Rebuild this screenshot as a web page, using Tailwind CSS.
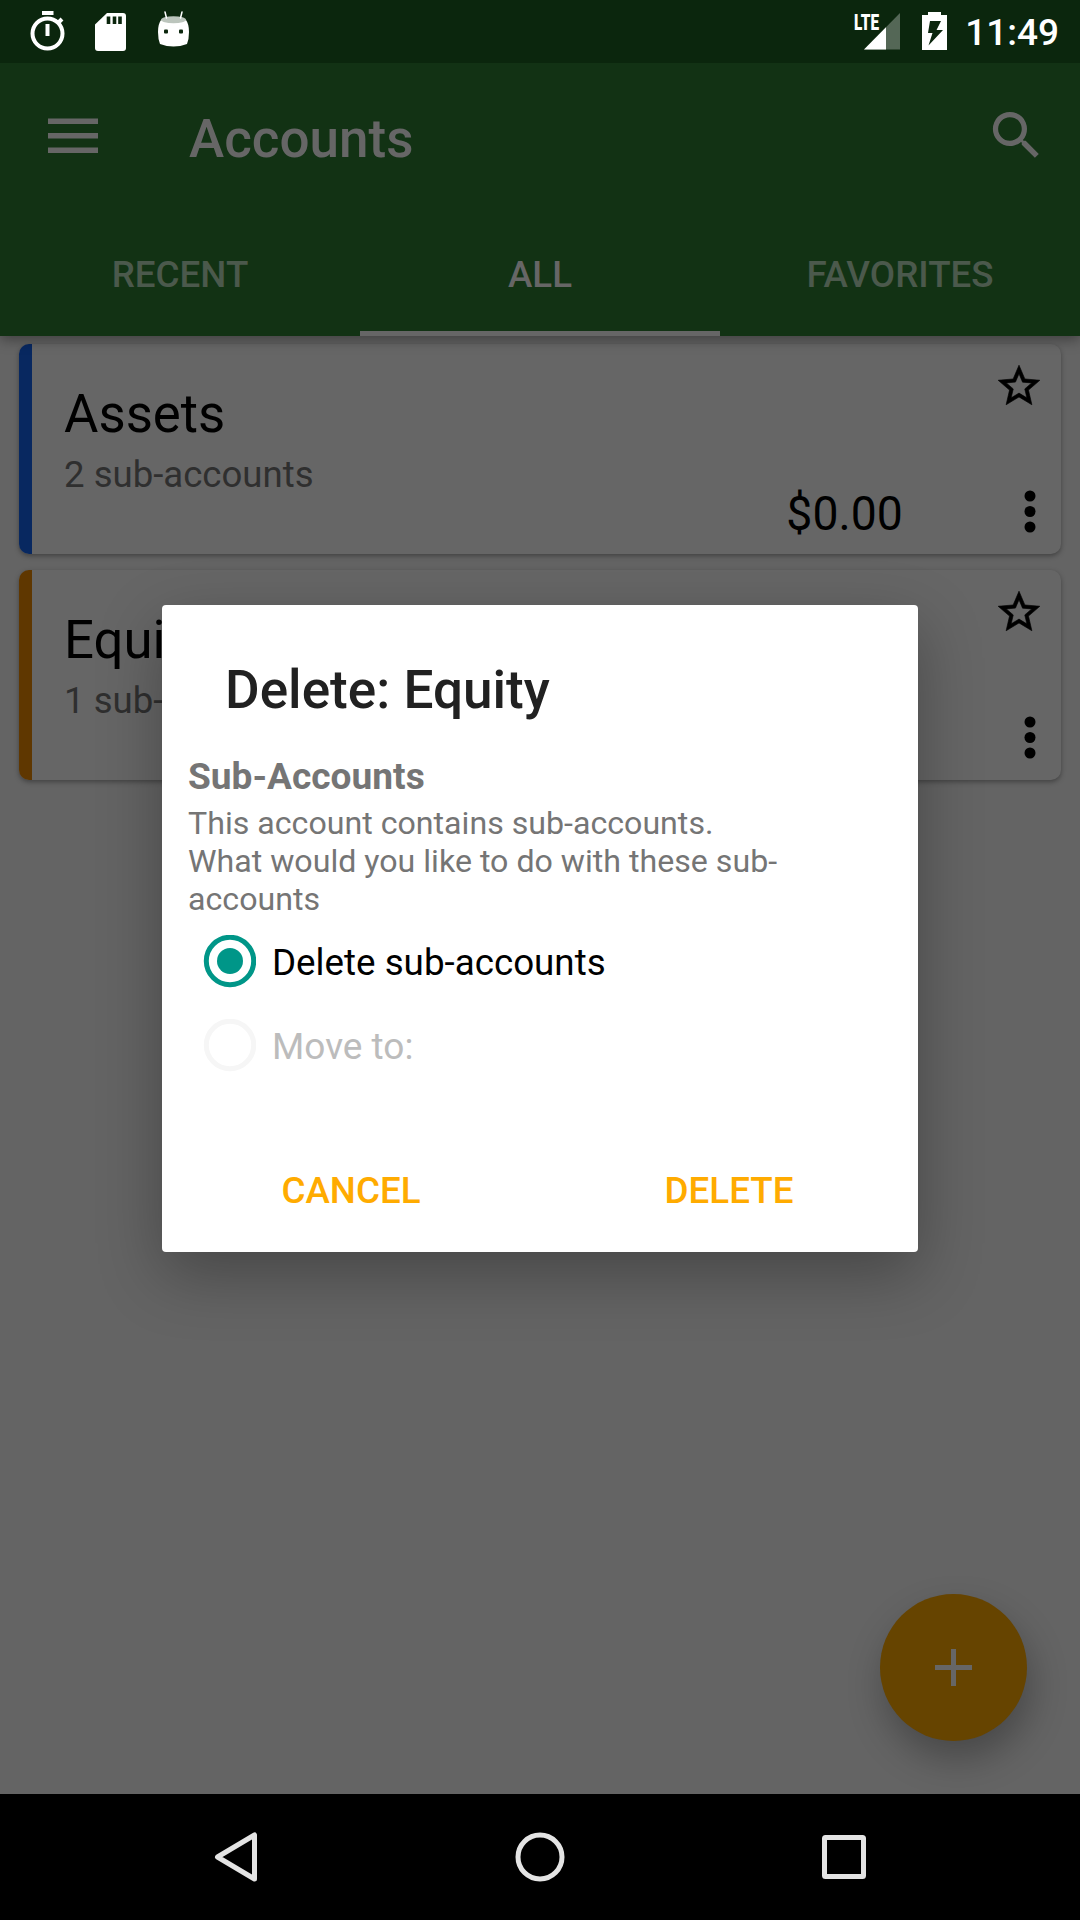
<!DOCTYPE html>
<html lang="en">
<head>
<meta charset="utf-8">
<title>Accounts</title>
<script src="https://cdn.jsdelivr.net/npm/@tailwindcss/browser@4"></script>
</head>
<body class="bg-[#646464] font-['Roboto',sans-serif]">
<div class="relative flex h-[1920px] w-[1080px] flex-col overflow-hidden">

  <header class="relative z-10 shadow-[0_4px_12px_rgba(0,0,0,0.35)]">
    <div class="flex h-[63px] items-center bg-[#0b260d] text-white">
      <svg class="ml-[24px] h-[63px] w-[180px]" viewBox="24 0 180 63" fill="none">
        <rect x="42" y="11" width="11.500" height="4" fill="#fff"/>
        <circle cx="47.500" cy="33.500" r="15" stroke="#fff" stroke-width="4"/>
        <path d="M47.500 24v12M57.500 23.500l4.500-4.500" stroke="#fff" stroke-width="4"/>
        <path d="M107 13h16q3 0 3 3v32q0 3-3 3H98q-3 0-3-3V24.500z" fill="#fff"/>
        <path d="M108.500 16.500v7.500M114.500 16.500v7.500M120 16.500v7.500" stroke="#0b260d" stroke-width="3.600"/>
        <path d="M161 20q12.500 5 25 0q3 4 3 12q0 7-2 12q-13.500 5-27 0q-2-5-2-12q0-8 3-12z" fill="#fff"/>
        <ellipse cx="173.500" cy="19.800" rx="12.500" ry="3.500" fill="#bcc5bd"/>
        <path d="M165 12l1.500 6M182 12l-1.500 6" stroke="#fff" stroke-width="1.500" stroke-linecap="round"/>
        <rect x="164" y="29.500" width="4" height="4" rx="1" fill="#0b260d"/><rect x="179" y="29.500" width="4" height="4" rx="1" fill="#0b260d"/>
      </svg>
      <div class="relative ml-auto h-[63px] w-[110px]">
        <svg class="h-[63px] w-[110px]" viewBox="850 0 110 63">
          <path d="M864 49.500L900 13v36.500z" fill="#fff" fill-opacity=".3"/>
          <path d="M864 49.500L886 27.300v22.200z" fill="#fff"/>
          <path d="M922 15h6v-3h13v3h6v35h-25z" fill="#fff"/>
          <path d="M930 21h11l-4.500 9h6.500l-14.500 15.500 4-12.500h-4.500z" fill="#0b260d"/>
        </svg>
        <span class="absolute left-[4px] top-[12px] origin-left scale-x-[.68] text-[22.500px] leading-[20px] font-black">LTE</span>
      </div>
      <span class="mr-[21px] ml-[5px] pt-[3px] text-[37px] font-medium leading-[60px]">11:49</span>
    </div>
    <div class="flex h-[147px] items-center bg-[#123214] text-[#666]">
      <svg class="ml-[48px] mb-[2px] h-[36px] w-[50px]" viewBox="0 0 50 36" fill="currentColor"><path d="M0 .5h50v5.500H0zM0 15h50v5.500H0zM0 29.500h50V35H0z"/></svg>
      <h1 class="ml-[91px] mt-[7px] text-[53px] font-medium">Accounts</h1>
      <svg class="ml-auto mr-[32px] mb-[2px] h-[63px] w-[63px]" viewBox="0 0 24 24" fill="currentColor"><path d="M15.500 14h-.79l-.28-.27A6.471 6.471 0 0 0 16 9.500 6.500 6.500 0 1 0 9.500 16c1.610 0 3.090-.59 4.230-1.570l.27.28v.79l5 4.990L20.490 19l-4.990-5zm-6 0C7.010 14 5 11.990 5 9.500S7.010 5 9.500 5 14 7.010 14 9.500 11.990 14 9.500 14z"/></svg>
    </div>
    <nav class="grid h-[126px] grid-cols-3 bg-[#123214] text-center text-[36.750px] font-medium leading-[130px] text-[#4b594c]">
      <span class="h-[126px]">RECENT</span>
      <span class="h-[126px] border-b-[5px] border-[#666] text-[#666]">ALL</span>
      <span class="h-[126px]">FAVORITES</span>
    </nav>
  </header>

  <main class="flex flex-1 flex-col gap-[16px] px-[19px] pt-[8px]">
    <section class="flex h-[210px] overflow-hidden rounded-[10px] bg-[#666] shadow-[0_2px_5px_rgba(0,0,0,0.35)]">
      <div class="w-[13px] bg-[#082860]"></div>
      <div class="flex-1 pl-[32px] pt-[38px]">
        <h2 class="text-[52.750px] leading-[64px] text-black">Assets</h2>
        <p class="text-[36.600px] leading-[58px] text-[#2f2f2f]">2 sub-accounts</p>
      </div>
      <p class="mt-[142px] mr-[91px] text-[47.250px] leading-[56px] text-black"><span class="inline-block origin-right scale-x-[.98]">$0.00</span></p>
      <div class="flex w-[67px] flex-col">
        <svg class="mt-[17px] h-[50px] w-[50px]" viewBox="0 0 24 24" stroke="#000" stroke-width=".3"><path d="M22 9.240l-7.190-.62L12 2 9.190 8.630 2 9.240l5.460 4.730L5.820 21 12 17.270 18.180 21l-1.630-7.030L22 9.240zM12 15.400l-3.760 2.270 1-4.280-3.320-2.880 4.380-.38L12 6.100l1.710 4.040 4.380.38-3.320 2.880 1 4.280L12 15.400z"/></svg>
        <svg class="mt-[78px] ml-[29px] h-[46px] w-[14px]" viewBox="0 0 14 46"><circle cx="7" cy="7" r="5.500"/><circle cx="7" cy="22.500" r="5.500"/><circle cx="7" cy="38" r="5.500"/></svg>
      </div>
    </section>
    <section class="flex h-[210px] overflow-hidden rounded-[10px] bg-[#666] shadow-[0_2px_5px_rgba(0,0,0,0.35)]">
      <div class="w-[13px] bg-[#5f3700]"></div>
      <div class="flex-1 pl-[32px] pt-[38px]">
        <h2 class="text-[52.750px] leading-[64px] text-black">Equity</h2>
        <p class="text-[36.600px] leading-[58px] text-[#2f2f2f]">1 sub-account</p>
      </div>
      <div class="flex w-[67px] flex-col">
        <svg class="mt-[17px] h-[50px] w-[50px]" viewBox="0 0 24 24" stroke="#000" stroke-width=".3"><path d="M22 9.240l-7.190-.62L12 2 9.190 8.630 2 9.240l5.460 4.730L5.820 21 12 17.270 18.180 21l-1.630-7.030L22 9.240zM12 15.400l-3.760 2.270 1-4.280-3.320-2.880 4.380-.38L12 6.100l1.710 4.040 4.380.38-3.320 2.880 1 4.280L12 15.400z"/></svg>
        <svg class="mt-[78px] ml-[29px] h-[46px] w-[14px]" viewBox="0 0 14 46"><circle cx="7" cy="7" r="5.500"/><circle cx="7" cy="22.500" r="5.500"/><circle cx="7" cy="38" r="5.500"/></svg>
      </div>
    </section>
  </main>

  <button class="absolute left-[880px] top-[1594px] flex h-[147px] w-[147px] items-center justify-center rounded-full bg-[#640] shadow-[4px_18px_36px_rgba(0,0,0,0.28)]">
    <svg class="h-[37px] w-[37px]" viewBox="0 0 37 37" fill="#666"><path d="M16 0h5v16h16v5H21v16h-5V21H0v-5h16z"/></svg>
  </button>

  <div role="dialog" class="absolute left-[162px] top-[605px] z-20 flex h-[647px] w-[756px] flex-col rounded-[4px] bg-white px-[26px] shadow-[0_22px_64px_rgba(0,0,0,0.3)]">
    <h2 class="mt-[53px] pl-[37px] text-[53.100px] font-medium leading-[64px] text-[#212121]">Delete: Equity</h2>
    <h3 class="mt-[33px] text-[37.100px] font-bold leading-[44px] text-[#757575]">Sub-Accounts</h3>
    <p class="mt-[5px] text-[32.150px] leading-[38px] text-[#757575]">This account contains sub-accounts.<br>What would you like to do with these sub-<br>accounts</p>
    <div class="mt-px flex h-[84px] items-center pl-[15px] text-[36.750px] text-black">
      <svg class="mr-[16px] h-[53px] w-[53px]" viewBox="0 0 53 53"><circle cx="27" cy="26" r="23.700" fill="none" stroke="#009688" stroke-width="5"/><circle cx="27" cy="26" r="13" fill="#009688"/></svg>
      <span class="mt-[3px]">Delete sub-accounts</span>
    </div>
    <div class="flex h-[84px] items-center pl-[15px] text-[37px] text-[#bcbcbc]">
      <svg class="mr-[16px] h-[53px] w-[53px]" viewBox="0 0 53 53"><circle cx="27" cy="26" r="23.700" fill="none" stroke="#f6f6f6" stroke-width="5"/></svg>
      <span class="mt-[3px]">Move to:</span>
    </div>
    <div class="-mx-[26px] mt-[76px] grid grid-cols-2 text-center text-[36.750px] font-medium leading-[56px] text-[#ffab00]">
      <span>CANCEL</span><span>DELETE</span>
    </div>
  </div>

  <footer class="h-[126px] bg-black">
    <svg class="h-[126px] w-[1080px]" viewBox="0 1794 1080 126" fill="none" stroke="#e4e4e4" stroke-width="5" stroke-linejoin="round">
      <path d="M254.500 1835v44L217.500 1857z"/>
      <circle cx="540" cy="1857" r="22"/>
      <rect x="824.500" y="1837.500" width="39" height="39" rx="1"/>
    </svg>
  </footer>
</div>
</body>
</html>
